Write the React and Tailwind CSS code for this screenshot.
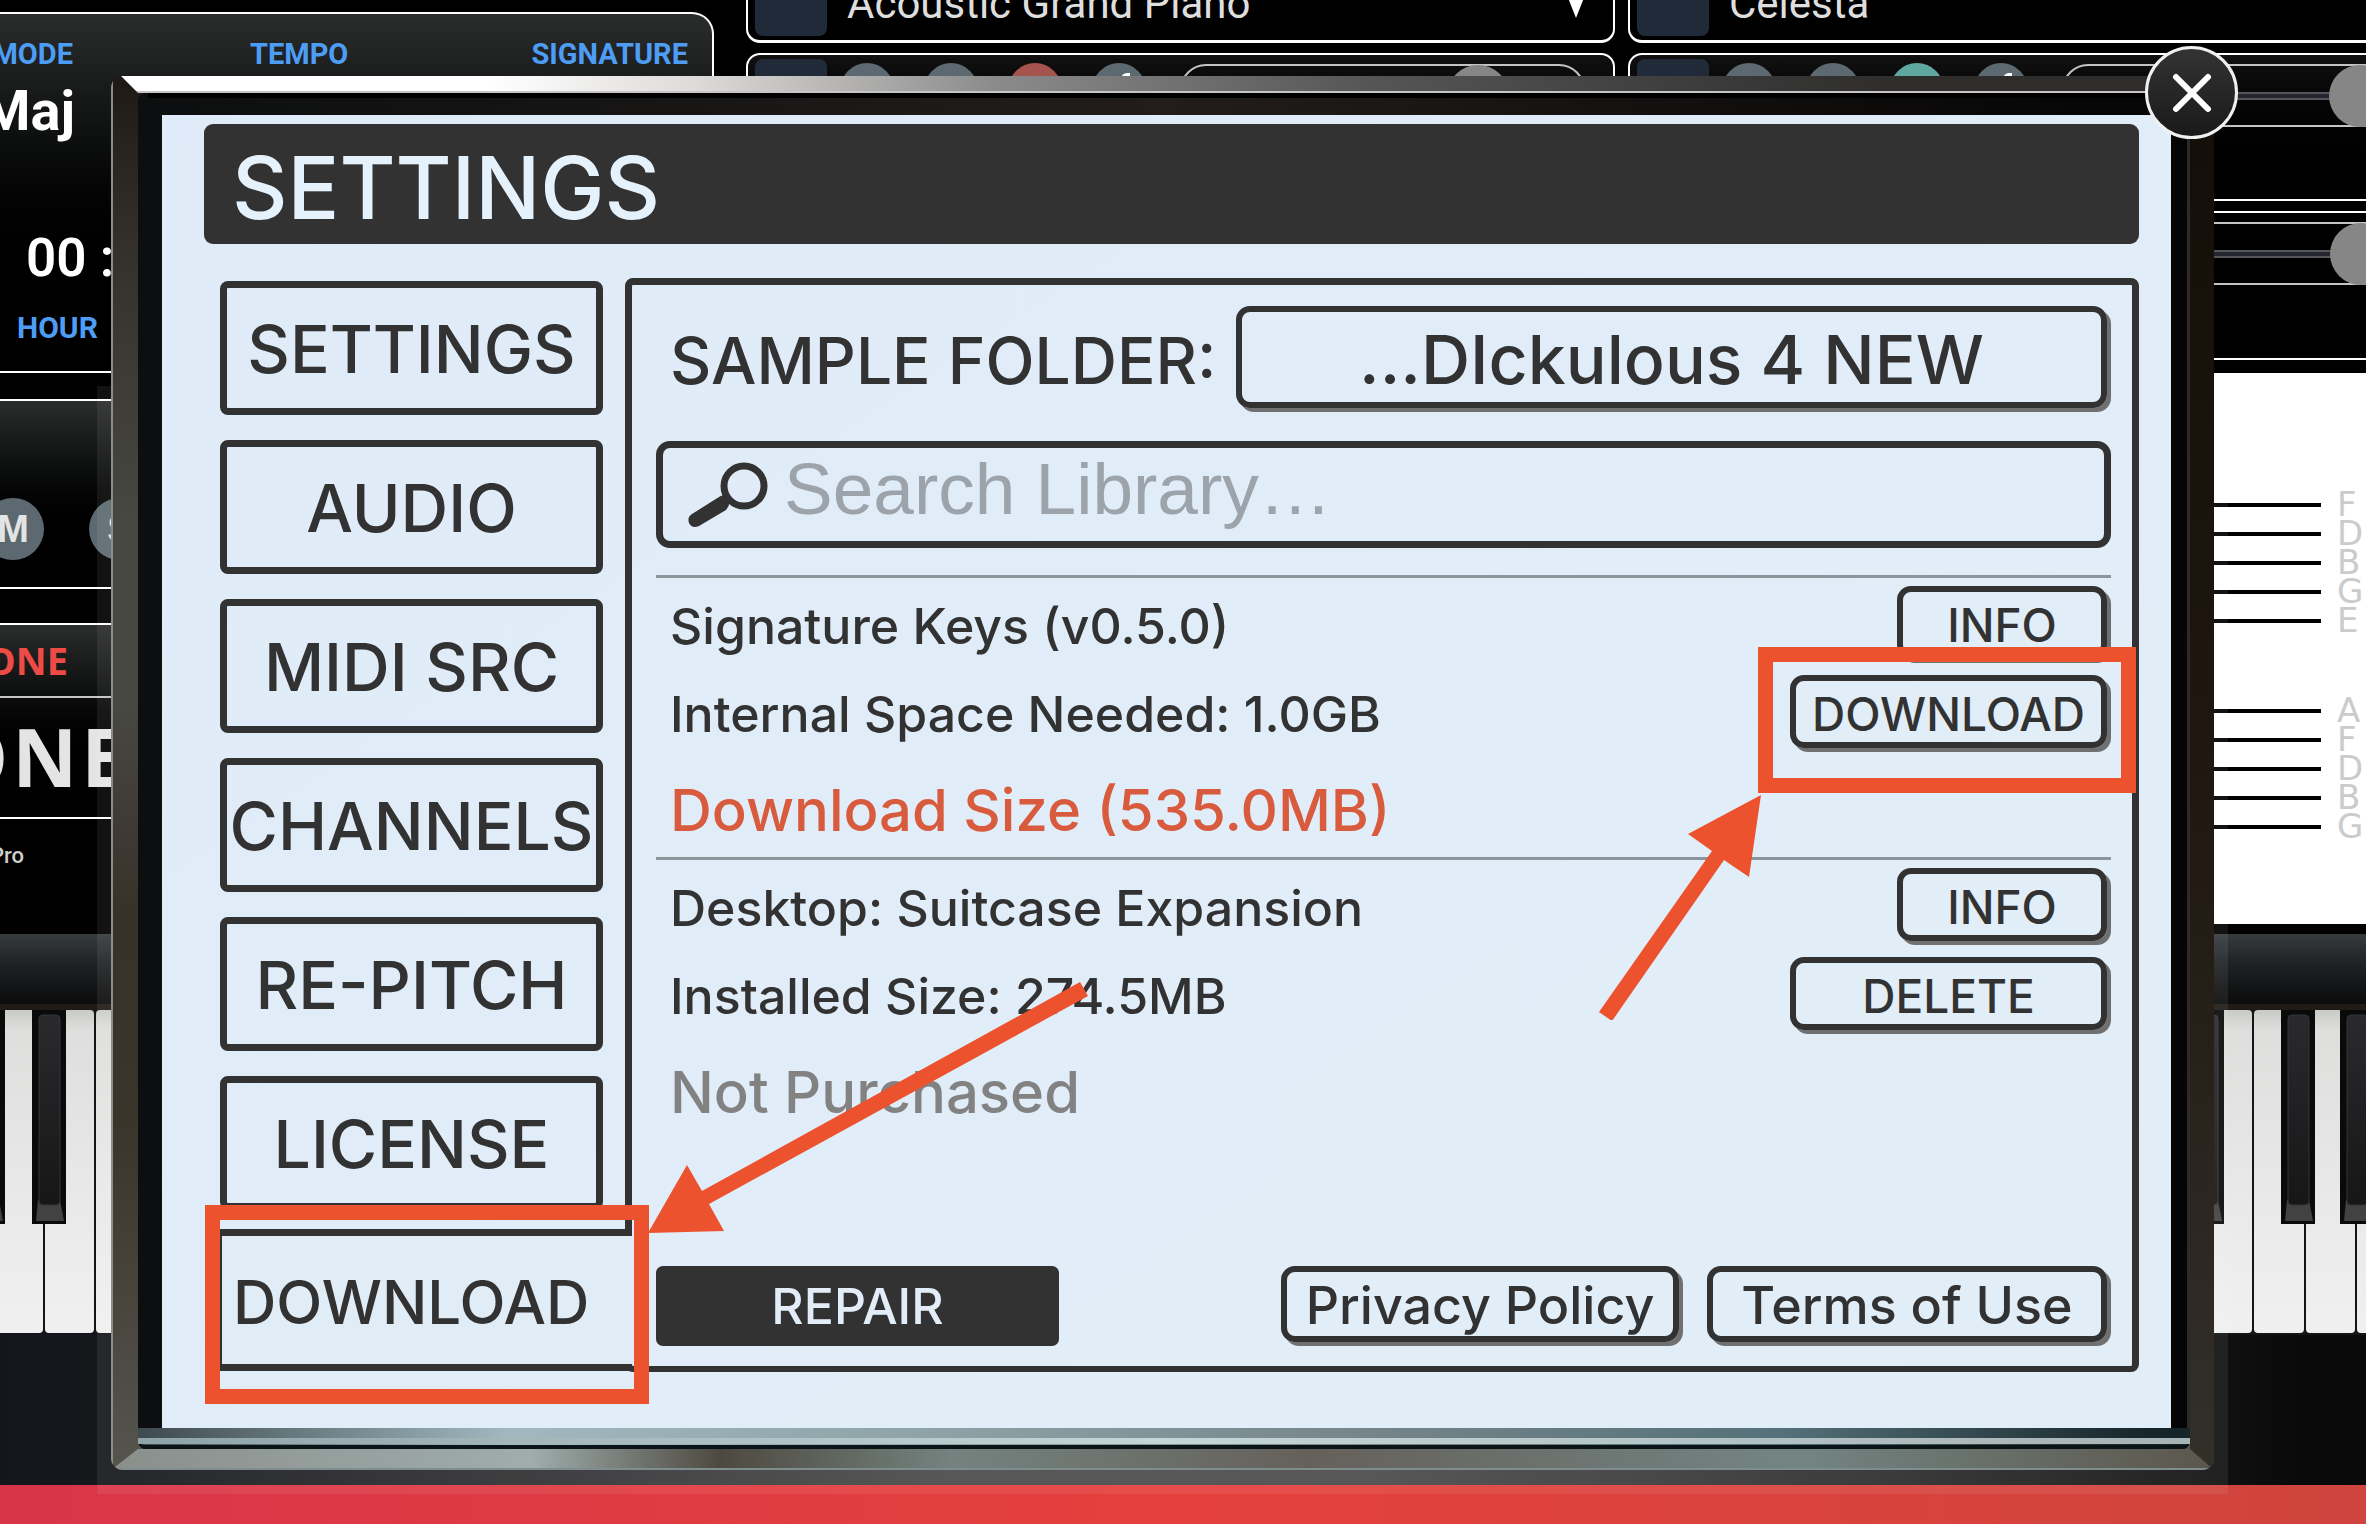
import { useState } from 'react'

const tabs = ['SETTINGS', 'AUDIO', 'MIDI SRC', 'CHANNELS', 'RE-PITCH', 'LICENSE']

const library = [
  {
    name: 'Signature Keys (v0.5.0)',
    size: 'Internal Space Needed: 1.0GB',
    status: 'Download Size (535.0MB)',
    statusColor: 'text-[#d95b3e]',
    action: 'DOWNLOAD',
    marked: true,
  },
  {
    name: 'Desktop: Suitcase Expansion',
    size: 'Installed Size: 274.5MB',
    status: 'Not Purchased',
    statusColor: 'text-[#828282]',
    action: 'DELETE',
  },
]

function OutlineButton({ children, className }) {
  return (
    <button
      type="button"
      className={`mr-1 mb-1 flex items-center justify-center whitespace-nowrap rounded-[14px] border-[6px] border-[#323232] pt-1 leading-none font-medium shadow-[4px_4px_0_#707070] ${className}`}
    >
      {children}
    </button>
  )
}

/* Background: top left panels */

function SongInfo() {
  return (
    <div className="w-[714px] shrink-0 overflow-hidden pt-[12px] font-[Roboto,sans-serif]">
      <section className="h-[361px] rounded-tr-[22px] border-y-2 border-r-2 border-white bg-linear-to-b from-[#2b2d2d] to-black to-80% pt-[20px]">
        <div className="flex items-center text-[29px] leading-[40px] font-bold text-[#4d9df5]">
          <span className="flex w-[73px] justify-end">MODE</span>
          <span className="ml-[177px]">TEMPO</span>
          <span className="mr-[24px] ml-auto">SIGNATURE</span>
        </div>
        <p className="mt-[5px] flex w-[75px] justify-end text-[56px] leading-[64px] font-bold text-white">Maj</p>
        <p className="mt-[83px] ml-[26px] text-[53px] leading-[64px] font-semibold whitespace-pre text-white">00 :</p>
        <p className="mt-[18px] ml-[17px] text-[30px] leading-[40px] font-bold text-[#4d9df5]">HOUR</p>
      </section>

      <section className="mt-[26px] flex h-[190px] items-start border-y-2 border-white bg-linear-to-b from-[#2b2d2d] to-black to-80% pt-[97px] font-['Liberation_Sans',sans-serif] text-[38px] font-bold text-[#e4e4e4]">
        <span className="-ml-[18px] flex size-[62px] items-center justify-center rounded-full bg-[#5c6970]">M</span>
        <span className="ml-[45px] flex size-[62px] items-center justify-center rounded-full bg-[#5c6970]">S</span>
      </section>

      <section className="mt-[34px] h-[196px] border-y-2 border-white bg-linear-to-b from-[#2b2d2d] to-black to-80% font-['Open_Sans',sans-serif] font-bold">
        <p className="flex h-[71px] w-[68px] items-center justify-end text-[38px] text-[#ee4b46]">ONE</p>
        <hr className="border-t-2 border-[#c4c4c4]" />
        <p className="flex h-[116px] w-[130px] items-center justify-end text-[80px] tracking-wider text-[#e4e4e4]">ONE</p>
      </section>
      <p className="mt-[20px] flex w-[24px] justify-end text-[22px] font-medium text-[#cfcfcf]">Pro</p>
    </div>
  )
}

/* Background: instrument slots */

function Instrument({ name, accent }) {
  return (
    <div className="space-y-[10px]">
      <div className="flex h-[43px] items-end rounded-b-[14px] border-x-2 border-b-[3px] border-white pl-[7px]">
        <div className="mb-[4px] h-[36px] w-[72px] rounded-b-[8px] bg-[#212a39]" />
        <p className="mb-[12px] ml-[20px] font-[Roboto,sans-serif] text-[42px] leading-[48px] text-[#dedede]">{name}</p>
        <span className="mr-[22px] mb-[22px] ml-auto h-[38px] w-[30px] bg-white [clip-path:polygon(0_0,100%_0,50%_100%)]" />
      </div>
      <div className="flex h-[148px] items-start rounded-[14px] border-2 border-white bg-linear-to-b from-[#101010] to-black pt-[4px] pl-[7px]">
        <div className="h-[80px] w-[72px] rounded-[8px] bg-[#212a39]" />
        <div className="mt-[4px] ml-[13px] flex gap-[30px]">
          <span className="size-[54px] rounded-full bg-[#5c6970]" />
          <span className="size-[54px] rounded-full bg-[#5c6970]" />
          <span className={`size-[54px] rounded-full ${accent}`} />
          <span className="flex size-[54px] justify-center rounded-full bg-[#5c6970]">
            <span className="mt-[10px] ml-3 h-[6px] w-[9px] rounded-tl-full bg-white" />
          </span>
        </div>
        <div className="mt-[5px] mr-[28px] ml-[34px] flex h-[63px] flex-1 items-center rounded-[26px] border-2 border-[#c4c4c4]">
          <div className="flex h-[8px] w-full items-center border-y-2 border-[#55565c] bg-[#24262f] pl-[265px]">
            <span className="size-[62px] shrink-0 rounded-full bg-[#868686]" />
          </div>
        </div>
      </div>
      <div className="flex h-[149px] items-start border-y-2 border-white pt-[9px]">
        <div className="flex h-[63px] flex-1 items-center border-y-2 border-[#c4c4c4]">
          <div className="flex h-[8px] w-full items-center border-y-2 border-[#55565c] bg-[#24262f] pl-[702px]">
            <span className="size-[62px] shrink-0 rounded-full bg-[#868686]" />
          </div>
        </div>
      </div>
    </div>
  )
}

function Staff({ notes }) {
  return (
    <div>
      {notes.map((n, i) => (
        <div key={i} className="flex h-[29px] items-center">
          <span className="h-[4px] flex-1 bg-black" />
          <span className="w-[45px] pl-[16px] text-[34px] leading-[29px] text-[#cbcbcb]">{n}</span>
        </div>
      ))}
    </div>
  )
}

/* Background: piano keys */

function Keys({ width, seams, blacks }) {
  return (
    <svg width={width} height="325" viewBox={`0 0 ${width} 325`} className="block shrink-0">
      <defs>
        <linearGradient id="ivory" x1="0" y1="0" x2="0" y2="1">
          <stop offset="0" stopColor="#c9c9c5" />
          <stop offset="0.06" stopColor="#dededd" />
          <stop offset="0.7" stopColor="#ebebeb" />
          <stop offset="1" stopColor="#f0f0f0" />
        </linearGradient>
        <linearGradient id="ebony" x1="0" y1="0" x2="0" y2="1">
          <stop offset="0" stopColor="#2a2a2d" />
          <stop offset="1" stopColor="#161617" />
        </linearGradient>
      </defs>
      <rect width={width} height="325" fill="#141518" />
      {seams.slice(0, -1).map((x, i) => (
        <rect key={x} x={x + 1} y="0" width={seams[i + 1] - x - 2} height="323" rx="4" fill="url(#ivory)" />
      ))}
      {blacks.map((x) => (
        <g key={x}>
          <rect x={x} y="0" width="34" height="214" fill="#0a0a0b" />
          <path d={`M${x + 6} 190 h22 l4 21 h-28z`} fill="#424242" />
          <rect x={x + 7} y="5" width="21" height="190" rx="4" fill="url(#ebony)" stroke="#35353a" />
        </g>
      ))}
    </svg>
  )
}

function Backdrop() {
  return (
    <div className="flex min-h-screen flex-col bg-black" aria-hidden="true">
      <div className="flex h-[934px] overflow-hidden">
        <SongInfo />
        <div className="ml-[32px] min-w-0 flex-1">
          <div className="grid grid-cols-[869px_869px] gap-[13px]">
            <Instrument name="Acoustic Grand Piano" accent="bg-[#a4534d]" />
            <Instrument name="Celesta" accent="bg-[#5fa8a1]" />
          </div>
          <div className="mt-[13px] flex h-[551px] flex-col gap-[61px] bg-white pt-[117px] font-['DejaVu_Sans',sans-serif]">
            <Staff notes={['F', 'D', 'B', 'G', 'E']} />
            <Staff notes={['A', 'F', 'D', 'B', 'G']} />
          </div>
        </div>
      </div>
      <div className="h-[76px] border-b-[6px] border-[#211b17] bg-linear-to-b from-[#363b3e] via-[#1c1f21] to-[#0b0b0b]" />
      <div className="flex justify-between">
        <Keys width={180} seams={[-7, 44, 95, 146, 197]} blacks={[-29, 32]} />
        <Keys width={180} seams={[-35, 16, 67, 119, 170, 221]} blacks={[4, 95, 154]} />
      </div>
      <div className="h-[150px] bg-[linear-gradient(90deg,#14161b_0%,#17181c_6%,#4a4a4a_40%,#4a4a4a_58%,#2c2c2c_80%,#0a0a0a_97%)]" />
      <div className="flex-1 bg-linear-to-r from-[#d93549] via-[#e5403c] to-[#cf443e]" />
    </div>
  )
}

/* Callouts */

function ArrowToTab() {
  return (
    <svg
      width="460"
      height="260"
      viewBox="640 980 460 260"
      className="pointer-events-none absolute bottom-[131px] left-[419px] max-w-none"
      aria-hidden="true"
    >
      <path d="M1081 982 L1089 996 L710 1204 L725 1231 L649 1233 L688 1165 L703 1191 Z" fill="#eb522d" />
    </svg>
  )
}

function ArrowToAction() {
  return (
    <svg
      width="170"
      height="230"
      viewBox="1595 790 170 230"
      className="pointer-events-none absolute top-[115px] right-full mr-[26px] max-w-none"
      aria-hidden="true"
    >
      <path d="M1600 1012 L1713 851 L1689 834 L1762 795 L1750 877 L1725 860 L1613 1021 Z" fill="#eb522d" />
    </svg>
  )
}

/* Download page */

function LibraryItem({ item }) {
  return (
    <li className="flex h-[282px] justify-between border-t-[3px] border-[#8b959c] pt-[8px]">
      <div className="pl-[14px] text-[50px] leading-none font-medium whitespace-nowrap">
        <p className="flex h-[80px] items-center">{item.name}</p>
        <p className="mt-[8px] flex h-[80px] items-center">{item.size}</p>
        <p className={`mt-[12px] flex h-[88px] items-center text-[58px] ${item.statusColor}`}>{item.status}</p>
      </div>
      <div className="flex flex-col items-end gap-[12px] text-[46px]">
        <OutlineButton className="h-[73px] w-[210px]">INFO</OutlineButton>
        <div className="relative">
          <OutlineButton className="h-[73px] w-[317px]">{item.action}</OutlineButton>
          {item.marked && (
            <>
              <span className="pointer-events-none absolute -top-[28px] -right-[25px] -bottom-[41px] -left-[32px] border-[15px] border-[#eb522d]" />
              <ArrowToAction />
            </>
          )}
        </div>
      </div>
    </li>
  )
}

function DownloadPanel() {
  const [query, setQuery] = useState('')

  return (
    <main className="ml-[22px] flex min-w-0 flex-1 flex-col rounded-[8px] border-x-[7px] border-t-[7px] border-b-[6px] border-[#323232] pt-[21px] pr-[21px] pb-[20px] pl-[24px]">
      <div className="flex h-[106px] items-center">
        <span className="ml-[14px] w-[566px] pt-1 text-[64px] leading-none font-medium whitespace-nowrap">
          SAMPLE FOLDER:
        </span>
        <OutlineButton className="h-[102px] flex-1 text-[68px]">...DIckulous 4 NEW</OutlineButton>
      </div>

      <label className="mt-[29px] flex h-[107px] items-center rounded-[14px] border-[7px] border-[#323232] pl-[24px]">
        <svg width="84" height="68" viewBox="0 0 84 68" className="shrink-0" aria-hidden="true">
          <circle cx="57" cy="25" r="20" fill="none" stroke="#323232" strokeWidth="7" />
          <path d="M32 36 Q37 32 42 37 Q44 43 39 49 L12 65 Q5 68 2 62 Q0 56 5 53 Z" fill="#323232" />
        </svg>
        <input
          type="text"
          value={query}
          onChange={(e) => setQuery(e.target.value)}
          placeholder="Search Library…"
          aria-label="Search Library"
          className="ml-[13px] h-full min-w-0 flex-1 bg-transparent pb-[12px] font-['Liberation_Sans',sans-serif] text-[73px] outline-none placeholder:text-[#9ca3aa]"
        />
      </label>

      <ul className="mt-[27px] h-[691px]">
        {library.map((item) => (
          <LibraryItem key={item.name} item={item} />
        ))}
      </ul>

      <footer className="flex items-center text-[52px]">
        <button
          type="button"
          className="h-[80px] w-[403px] rounded-[7px] bg-[#323232] text-[50px] leading-none font-medium text-[#e2edf8]"
        >
          REPAIR
        </button>
        <OutlineButton className="ml-auto h-[76px] w-[398px]">Privacy Policy</OutlineButton>
        <OutlineButton className="ml-[24px] h-[76px] w-[400px]">Terms of Use</OutlineButton>
      </footer>
    </main>
  )
}

export default function App() {
  const [open, setOpen] = useState(true)

  return (
    <div className="relative min-h-screen overflow-hidden">
      <Backdrop />

      {open && (
        <div role="dialog" aria-label="Settings" className="absolute top-[76px] right-[152px] left-[111px]">
          {/* faint glow round the lower part */}
          <div className="absolute -inset-x-[14px] top-[310px] -bottom-[24px] bg-white/7" />

          {/* outer bezel */}
          <div className="relative overflow-hidden rounded-[12px] bg-[linear-gradient(180deg,#1e1914_0%,#33302a_12%,#474841_32%,#474841_45%,#38312a_60%,#3a342b_75%,#55554e_100%)] pt-[17px] pr-[24px] pb-[21px] pl-[27px]">
            <div className="absolute inset-y-0 left-0 w-[2px] bg-[#8d8d88]" />
            <div className="absolute inset-y-0 right-0 w-[24px] bg-linear-to-b from-[#130e08] via-[#1f1710] to-[#33302a]" />
            <div className="absolute inset-x-0 top-0 h-[17px] border-b-2 border-[#c9c5c5] bg-[linear-gradient(90deg,#fff_0%,#fff_18%,#dcdad8_28%,#8b8b8b_42%,#555_60%,#2e2d2c_85%)] [clip-path:polygon(10px_0,100%_0,calc(100%-24px)_100%,27px_100%)]" />
            <div className="absolute inset-x-0 bottom-0 h-[21px] border-b-2 border-[#7f8d90] bg-[linear-gradient(90deg,#8a8f8b_0%,#9fadac_20%,#4d4940_29%,#74837f_40%,#65605a_57%,#738583_80%,#5b564c_100%)] [clip-path:polygon(27px_0,calc(100%-24px)_0,100%_100%,0_100%)]" />

            {/* inner bezel */}
            <div className="relative rounded-[8px] bg-linear-to-r from-[#0c0e0f] via-[#221d1a] to-[#050505] pt-[22px] pr-[19px] pb-[21px] pl-[24px]">
              <div className="absolute inset-x-[10px] top-0 h-[5px] bg-black" />
              <div className="absolute inset-y-[10px] right-0 w-[3px] bg-[#2e2a29]" />
              <div className="absolute inset-x-0 bottom-0 h-[21px] rounded-b-[8px] border-b-[4px] border-[#0b1417] bg-[linear-gradient(90deg,#3d4a4e_0%,#a1b8c0_18%,#8fa4a8_38%,#75858a_60%,#557179_80%,#16252a_98%)]">
                <div className="mt-[10px] h-[6px] bg-linear-to-r from-[#8fa4a8] via-[#c5d6d8] to-[#a5b2b6]" />
              </div>

              <div className="relative bg-linear-to-br from-[#dfebf8] to-[#e2eef7] pt-[9px] pr-[32px] pb-[56px] pl-[42px] font-[Inter,sans-serif] text-[#323232]">
                <header className="flex h-[120px] items-center rounded-[9px] bg-[#323232] pt-[8px] pl-[28px]">
                  <h1 className="text-[86px] leading-none font-medium text-[#e6f2fb]">SETTINGS</h1>
                </header>

                <div className="mt-[34px] flex pl-[16px]">
                  <nav className="flex w-[383px] shrink-0 flex-col pt-[3px] text-[66px] leading-none font-medium">
                    <div className="flex flex-col gap-[25px]">
                      {tabs.map((tab) => (
                        <button
                          key={tab}
                          type="button"
                          className="flex h-[134px] items-center justify-center rounded-[8px] border-[7px] border-[#323232] pt-[2px] whitespace-nowrap"
                        >
                          {tab}
                        </button>
                      ))}
                    </div>
                    <div className="relative z-10 mt-[19px] w-[412px]">
                      <button
                        type="button"
                        aria-current="page"
                        className="flex h-[142px] w-full items-center border-y-[7px] border-l-2 border-[#323232] bg-[#e0edf7] pt-1 pl-[11px] text-[60px]"
                      >
                        DOWNLOAD
                      </button>
                      <span className="pointer-events-none absolute -top-[24px] -right-[17px] -bottom-[33px] -left-[15px] border-[15px] border-[#eb522d]" />
                      <ArrowToTab />
                    </div>
                  </nav>

                  <DownloadPanel />
                </div>
              </div>
            </div>
          </div>

          <button
            type="button"
            aria-label="Close"
            onClick={() => setOpen(false)}
            className="absolute -top-[30px] -right-[24px] flex size-[93px] items-center justify-center rounded-full border-[3px] border-[#f0f0f0] bg-linear-to-b from-[#333] to-[#1a1a1a]"
          >
            <svg width="40" height="40" viewBox="0 0 40 40" aria-hidden="true">
              <path d="M4 4 L36 36 M36 4 L4 36" stroke="#fff" strokeWidth="6" strokeLinecap="round" />
            </svg>
          </button>
        </div>
      )}
    </div>
  )
}
